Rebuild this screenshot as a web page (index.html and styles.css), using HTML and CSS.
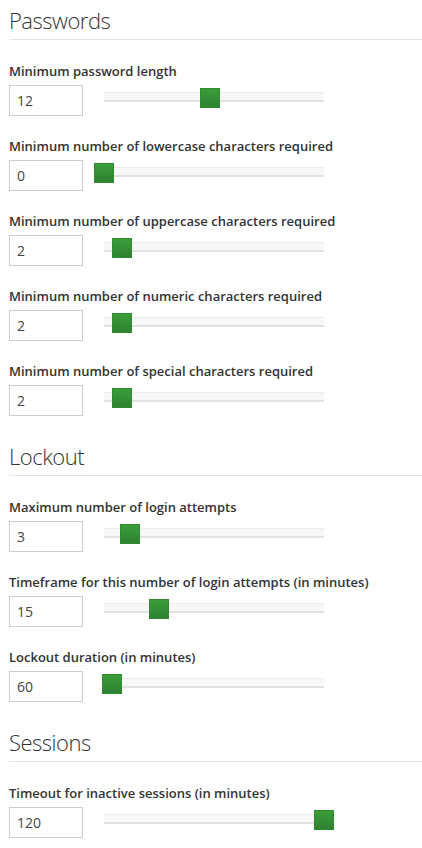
FILE: index.html
```html
<!DOCTYPE html>
<html>
<head>
<meta charset="utf-8">
<link rel="stylesheet" href="styles.css">
</head>
<body>
<div class="page">
  <section class="group">
    <h2 class="group-title">Passwords</h2>
    <div class="field">
      <label class="field-label">Minimum password length</label>
      <div class="field-row">
        <input class="num" type="text" value="12">
        <div class="slider"><div class="track"></div><div class="thumb" style="left:48%"></div></div>
      </div>
    </div>
    <div class="field">
      <label class="field-label">Minimum number of lowercase characters required</label>
      <div class="field-row">
        <input class="num" type="text" value="0">
        <div class="slider"><div class="track"></div><div class="thumb" style="left:0%"></div></div>
      </div>
    </div>
    <div class="field">
      <label class="field-label">Minimum number of uppercase characters required</label>
      <div class="field-row">
        <input class="num" type="text" value="2">
        <div class="slider"><div class="track"></div><div class="thumb" style="left:8%"></div></div>
      </div>
    </div>
    <div class="field">
      <label class="field-label">Minimum number of numeric characters required</label>
      <div class="field-row">
        <input class="num" type="text" value="2">
        <div class="slider"><div class="track"></div><div class="thumb" style="left:8%"></div></div>
      </div>
    </div>
    <div class="field">
      <label class="field-label">Minimum number of special characters required</label>
      <div class="field-row">
        <input class="num" type="text" value="2">
        <div class="slider"><div class="track"></div><div class="thumb" style="left:8%"></div></div>
      </div>
    </div>
  </section>
  <section class="group">
    <h2 class="group-title">Lockout</h2>
    <div class="field">
      <label class="field-label">Maximum number of login attempts</label>
      <div class="field-row">
        <input class="num" type="text" value="3">
        <div class="slider"><div class="track"></div><div class="thumb" style="left:12%"></div></div>
      </div>
    </div>
    <div class="field">
      <label class="field-label">Timeframe for this number of login attempts (in minutes)</label>
      <div class="field-row">
        <input class="num" type="text" value="15">
        <div class="slider"><div class="track"></div><div class="thumb" style="left:25%"></div></div>
      </div>
    </div>
    <div class="field">
      <label class="field-label">Lockout duration (in minutes)</label>
      <div class="field-row">
        <input class="num" type="text" value="60">
        <div class="slider"><div class="track"></div><div class="thumb" style="left:3.6%"></div></div>
      </div>
    </div>
  </section>
  <section class="group">
    <h2 class="group-title">Sessions</h2>
    <div class="field">
      <label class="field-label">Timeout for inactive sessions (in minutes)</label>
      <div class="field-row">
        <input class="num" type="text" value="120">
        <div class="slider"><div class="track"></div><div class="thumb" style="left:100%"></div></div>
      </div>
    </div>
  </section>
</div>
</body>
</html>
```
FILE: styles.css
```css
html, body {
  margin: 0;
  padding: 0;
  background: #ffffff;
}
.page {
  padding: 5px 0 0 9px;
  font-family: "Open Sans", "Noto Sans", sans-serif;
  color: #333333;
}
.group {
  padding-bottom: 4px;
}
.group-title {
  margin: 0 0 22px 0;
  padding: 0 0 4px 0;
  font-size: 22px;
  line-height: 30px;
  font-weight: 300;
  letter-spacing: -0.5px;
  color: #333333;
  border-bottom: 1px solid #e3e3e3;
}
.field {
  margin-bottom: 21px;
}
.field-label {
  display: block;
  font-size: 13px;
  line-height: 18px;
  font-weight: 600;
  color: #333333;
  margin-bottom: 5px;
}
.field-row {
  display: flex;
  align-items: flex-start;
}
.num {
  box-sizing: border-box;
  width: 74px;
  height: 31px;
  margin: 0;
  padding: 0 0 0 7px;
  border: 1px solid #cccccc;
  font-family: "Open Sans", "Noto Sans", sans-serif;
  font-size: 14px;
  color: #444444;
  background: #ffffff;
  outline: none;
}
.slider {
  position: relative;
  width: 220px;
  height: 20px;
  margin: 3px 0 0 21px;
}
.track {
  box-sizing: border-box;
  height: 10px;
  margin-top: 4px;
  background: #f7f7f7;
  border-top: 1px solid #ededed;
  border-bottom: 2px solid #e1e1e1;
}
.thumb {
  position: absolute;
  top: 0;
  width: 20px;
  height: 20px;
  margin-left: -10px;
  box-sizing: border-box;
  background: linear-gradient(#3a9e3a, #2e8131);
  border: 1px solid #2f8a31;
}
```
